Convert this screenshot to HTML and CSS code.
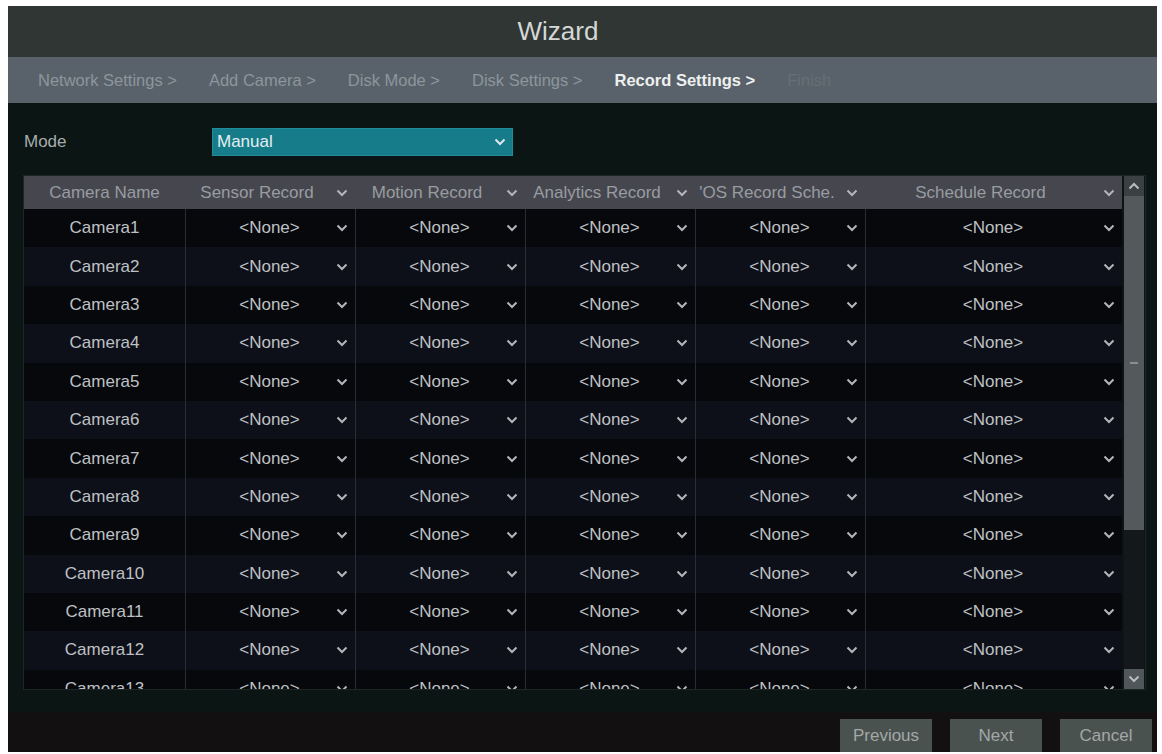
FILE: index.html
```html
<!DOCTYPE html>
<html>
<head>
<meta charset="utf-8">
<title>Wizard</title>
<link rel="stylesheet" href="styles.css">
</head>
<body>
<svg class="defs" width="0" height="0">
  <symbol id="chev" viewBox="0 0 12 8"><path d="M1.5 1.5L6 6l4.5-4.5" fill="none" stroke="currentColor" stroke-width="2"/></symbol>
  <symbol id="chevup" viewBox="0 0 12 8"><path d="M1.5 6.5L6 2l4.5 4.5" fill="none" stroke="currentColor" stroke-width="2"/></symbol>
</svg>
<div class="window">
  <div class="titlebar">Wizard</div>
  <div class="steps">
    <span class="step">Network Settings &gt;</span>
    <span class="step">Add Camera &gt;</span>
    <span class="step">Disk Mode &gt;</span>
    <span class="step">Disk Settings &gt;</span>
    <span class="step active">Record Settings &gt;</span>
    <span class="step future">Finish</span>
  </div>
  <div class="content">
    <div class="mode-row">
      <span class="mode-label">Mode</span>
      <div class="select"><span>Manual</span><svg class="ic"><use href="#chev"/></svg></div>
    </div>
    <div class="table-frame">
      <div class="grid">
        <div class="thead">
          <div class="hcell name">Camera Name</div>
          <div class="hcell"><span class="val">Sensor Record</span><span class="slot"><svg class="ic"><use href="#chev"/></svg></span></div>
          <div class="hcell"><span class="val">Motion Record</span><span class="slot"><svg class="ic"><use href="#chev"/></svg></span></div>
          <div class="hcell"><span class="val">Analytics Record</span><span class="slot"><svg class="ic"><use href="#chev"/></svg></span></div>
          <div class="hcell"><span class="val">'OS Record Sche.</span><span class="slot"><svg class="ic"><use href="#chev"/></svg></span></div>
          <div class="hcell"><span class="val">Schedule Record</span><span class="slot"><svg class="ic"><use href="#chev"/></svg></span></div>
        </div>
        <div class="tbody">
          <div class="row"><div class="cell name">Camera1</div><div class="cell dd"><span class="val">&lt;None&gt;</span><span class="slot"><svg class="ic"><use href="#chev"/></svg></span></div><div class="cell dd"><span class="val">&lt;None&gt;</span><span class="slot"><svg class="ic"><use href="#chev"/></svg></span></div><div class="cell dd"><span class="val">&lt;None&gt;</span><span class="slot"><svg class="ic"><use href="#chev"/></svg></span></div><div class="cell dd"><span class="val">&lt;None&gt;</span><span class="slot"><svg class="ic"><use href="#chev"/></svg></span></div><div class="cell dd"><span class="val">&lt;None&gt;</span><span class="slot"><svg class="ic"><use href="#chev"/></svg></span></div></div>
          <div class="row"><div class="cell name">Camera2</div><div class="cell dd"><span class="val">&lt;None&gt;</span><span class="slot"><svg class="ic"><use href="#chev"/></svg></span></div><div class="cell dd"><span class="val">&lt;None&gt;</span><span class="slot"><svg class="ic"><use href="#chev"/></svg></span></div><div class="cell dd"><span class="val">&lt;None&gt;</span><span class="slot"><svg class="ic"><use href="#chev"/></svg></span></div><div class="cell dd"><span class="val">&lt;None&gt;</span><span class="slot"><svg class="ic"><use href="#chev"/></svg></span></div><div class="cell dd"><span class="val">&lt;None&gt;</span><span class="slot"><svg class="ic"><use href="#chev"/></svg></span></div></div>
          <div class="row"><div class="cell name">Camera3</div><div class="cell dd"><span class="val">&lt;None&gt;</span><span class="slot"><svg class="ic"><use href="#chev"/></svg></span></div><div class="cell dd"><span class="val">&lt;None&gt;</span><span class="slot"><svg class="ic"><use href="#chev"/></svg></span></div><div class="cell dd"><span class="val">&lt;None&gt;</span><span class="slot"><svg class="ic"><use href="#chev"/></svg></span></div><div class="cell dd"><span class="val">&lt;None&gt;</span><span class="slot"><svg class="ic"><use href="#chev"/></svg></span></div><div class="cell dd"><span class="val">&lt;None&gt;</span><span class="slot"><svg class="ic"><use href="#chev"/></svg></span></div></div>
          <div class="row"><div class="cell name">Camera4</div><div class="cell dd"><span class="val">&lt;None&gt;</span><span class="slot"><svg class="ic"><use href="#chev"/></svg></span></div><div class="cell dd"><span class="val">&lt;None&gt;</span><span class="slot"><svg class="ic"><use href="#chev"/></svg></span></div><div class="cell dd"><span class="val">&lt;None&gt;</span><span class="slot"><svg class="ic"><use href="#chev"/></svg></span></div><div class="cell dd"><span class="val">&lt;None&gt;</span><span class="slot"><svg class="ic"><use href="#chev"/></svg></span></div><div class="cell dd"><span class="val">&lt;None&gt;</span><span class="slot"><svg class="ic"><use href="#chev"/></svg></span></div></div>
          <div class="row"><div class="cell name">Camera5</div><div class="cell dd"><span class="val">&lt;None&gt;</span><span class="slot"><svg class="ic"><use href="#chev"/></svg></span></div><div class="cell dd"><span class="val">&lt;None&gt;</span><span class="slot"><svg class="ic"><use href="#chev"/></svg></span></div><div class="cell dd"><span class="val">&lt;None&gt;</span><span class="slot"><svg class="ic"><use href="#chev"/></svg></span></div><div class="cell dd"><span class="val">&lt;None&gt;</span><span class="slot"><svg class="ic"><use href="#chev"/></svg></span></div><div class="cell dd"><span class="val">&lt;None&gt;</span><span class="slot"><svg class="ic"><use href="#chev"/></svg></span></div></div>
          <div class="row"><div class="cell name">Camera6</div><div class="cell dd"><span class="val">&lt;None&gt;</span><span class="slot"><svg class="ic"><use href="#chev"/></svg></span></div><div class="cell dd"><span class="val">&lt;None&gt;</span><span class="slot"><svg class="ic"><use href="#chev"/></svg></span></div><div class="cell dd"><span class="val">&lt;None&gt;</span><span class="slot"><svg class="ic"><use href="#chev"/></svg></span></div><div class="cell dd"><span class="val">&lt;None&gt;</span><span class="slot"><svg class="ic"><use href="#chev"/></svg></span></div><div class="cell dd"><span class="val">&lt;None&gt;</span><span class="slot"><svg class="ic"><use href="#chev"/></svg></span></div></div>
          <div class="row"><div class="cell name">Camera7</div><div class="cell dd"><span class="val">&lt;None&gt;</span><span class="slot"><svg class="ic"><use href="#chev"/></svg></span></div><div class="cell dd"><span class="val">&lt;None&gt;</span><span class="slot"><svg class="ic"><use href="#chev"/></svg></span></div><div class="cell dd"><span class="val">&lt;None&gt;</span><span class="slot"><svg class="ic"><use href="#chev"/></svg></span></div><div class="cell dd"><span class="val">&lt;None&gt;</span><span class="slot"><svg class="ic"><use href="#chev"/></svg></span></div><div class="cell dd"><span class="val">&lt;None&gt;</span><span class="slot"><svg class="ic"><use href="#chev"/></svg></span></div></div>
          <div class="row"><div class="cell name">Camera8</div><div class="cell dd"><span class="val">&lt;None&gt;</span><span class="slot"><svg class="ic"><use href="#chev"/></svg></span></div><div class="cell dd"><span class="val">&lt;None&gt;</span><span class="slot"><svg class="ic"><use href="#chev"/></svg></span></div><div class="cell dd"><span class="val">&lt;None&gt;</span><span class="slot"><svg class="ic"><use href="#chev"/></svg></span></div><div class="cell dd"><span class="val">&lt;None&gt;</span><span class="slot"><svg class="ic"><use href="#chev"/></svg></span></div><div class="cell dd"><span class="val">&lt;None&gt;</span><span class="slot"><svg class="ic"><use href="#chev"/></svg></span></div></div>
          <div class="row"><div class="cell name">Camera9</div><div class="cell dd"><span class="val">&lt;None&gt;</span><span class="slot"><svg class="ic"><use href="#chev"/></svg></span></div><div class="cell dd"><span class="val">&lt;None&gt;</span><span class="slot"><svg class="ic"><use href="#chev"/></svg></span></div><div class="cell dd"><span class="val">&lt;None&gt;</span><span class="slot"><svg class="ic"><use href="#chev"/></svg></span></div><div class="cell dd"><span class="val">&lt;None&gt;</span><span class="slot"><svg class="ic"><use href="#chev"/></svg></span></div><div class="cell dd"><span class="val">&lt;None&gt;</span><span class="slot"><svg class="ic"><use href="#chev"/></svg></span></div></div>
          <div class="row"><div class="cell name">Camera10</div><div class="cell dd"><span class="val">&lt;None&gt;</span><span class="slot"><svg class="ic"><use href="#chev"/></svg></span></div><div class="cell dd"><span class="val">&lt;None&gt;</span><span class="slot"><svg class="ic"><use href="#chev"/></svg></span></div><div class="cell dd"><span class="val">&lt;None&gt;</span><span class="slot"><svg class="ic"><use href="#chev"/></svg></span></div><div class="cell dd"><span class="val">&lt;None&gt;</span><span class="slot"><svg class="ic"><use href="#chev"/></svg></span></div><div class="cell dd"><span class="val">&lt;None&gt;</span><span class="slot"><svg class="ic"><use href="#chev"/></svg></span></div></div>
          <div class="row"><div class="cell name">Camera11</div><div class="cell dd"><span class="val">&lt;None&gt;</span><span class="slot"><svg class="ic"><use href="#chev"/></svg></span></div><div class="cell dd"><span class="val">&lt;None&gt;</span><span class="slot"><svg class="ic"><use href="#chev"/></svg></span></div><div class="cell dd"><span class="val">&lt;None&gt;</span><span class="slot"><svg class="ic"><use href="#chev"/></svg></span></div><div class="cell dd"><span class="val">&lt;None&gt;</span><span class="slot"><svg class="ic"><use href="#chev"/></svg></span></div><div class="cell dd"><span class="val">&lt;None&gt;</span><span class="slot"><svg class="ic"><use href="#chev"/></svg></span></div></div>
          <div class="row"><div class="cell name">Camera12</div><div class="cell dd"><span class="val">&lt;None&gt;</span><span class="slot"><svg class="ic"><use href="#chev"/></svg></span></div><div class="cell dd"><span class="val">&lt;None&gt;</span><span class="slot"><svg class="ic"><use href="#chev"/></svg></span></div><div class="cell dd"><span class="val">&lt;None&gt;</span><span class="slot"><svg class="ic"><use href="#chev"/></svg></span></div><div class="cell dd"><span class="val">&lt;None&gt;</span><span class="slot"><svg class="ic"><use href="#chev"/></svg></span></div><div class="cell dd"><span class="val">&lt;None&gt;</span><span class="slot"><svg class="ic"><use href="#chev"/></svg></span></div></div>
          <div class="row"><div class="cell name">Camera13</div><div class="cell dd"><span class="val">&lt;None&gt;</span><span class="slot"><svg class="ic"><use href="#chev"/></svg></span></div><div class="cell dd"><span class="val">&lt;None&gt;</span><span class="slot"><svg class="ic"><use href="#chev"/></svg></span></div><div class="cell dd"><span class="val">&lt;None&gt;</span><span class="slot"><svg class="ic"><use href="#chev"/></svg></span></div><div class="cell dd"><span class="val">&lt;None&gt;</span><span class="slot"><svg class="ic"><use href="#chev"/></svg></span></div><div class="cell dd"><span class="val">&lt;None&gt;</span><span class="slot"><svg class="ic"><use href="#chev"/></svg></span></div></div>
        </div>
      </div>
      <div class="scrollbar">
        <div class="sb-btn sb-up"><svg class="ic"><use href="#chevup"/></svg></div>
        <div class="sb-thumb"><span class="grip"></span></div>
        <div class="sb-track"></div>
        <div class="sb-btn sb-down"><svg class="ic"><use href="#chev"/></svg></div>
      </div>
    </div>
  </div>
  <div class="footer">
    <div class="btn">Previous</div>
    <div class="btn">Next</div>
    <div class="btn">Cancel</div>
  </div>
</div>
</body>
</html>
```
FILE: styles.css
```css
html, body {
  margin: 0;
  height: 754px;
  overflow: hidden;
  background: #ffffff;
}
body {
  padding: 6px 5px 2px 8px;
  box-sizing: border-box;
  font-family: "Liberation Sans", Arial, sans-serif;
}
.defs {
  position: absolute;
  width: 0;
  height: 0;
  overflow: hidden;
}
.window {
  height: 746px;
  display: flex;
  flex-direction: column;
  background: #0a1514;
}
.titlebar {
  height: 51px;
  flex: none;
  background: #2f3634;
  color: #d4d7d6;
  font-size: 26px;
  display: flex;
  align-items: center;
  justify-content: center;
  padding-right: 49px;
}
.steps {
  height: 46px;
  flex: none;
  background: #59626a;
  display: flex;
  align-items: center;
  gap: 32px;
  padding-left: 30px;
  font-size: 16.5px;
  color: #8c969c;
  white-space: nowrap;
}
.step.active {
  color: #eef0f0;
  font-weight: bold;
}
.step.future {
  color: #666f76;
}
.content {
  flex: 1;
  display: flex;
  flex-direction: column;
  padding: 25px 0 0 15px;
}
.mode-row {
  display: flex;
  align-items: center;
  height: 28px;
}
.mode-label {
  width: 188px;
  padding-left: 1px;
  color: #a6adad;
  font-size: 17px;
}
.select {
  width: 301px;
  height: 28px;
  box-sizing: border-box;
  background: #167c8a;
  border: 1px solid #1f8d9c;
  display: flex;
  align-items: center;
  justify-content: space-between;
  padding: 0 6px 0 4px;
  color: #e4eef0;
  font-size: 17px;
}
.select .ic {
  color: #dfe9ea;
}
.ic {
  width: 12px;
  height: 8px;
  color: #b2b6ba;
  display: block;
}
.table-frame {
  margin-top: 19px;
  width: 1123px;
  box-sizing: border-box;
  height: 515px;
  border: 1px solid #1c2624;
  padding-right: 1px;
  display: flex;
  gap: 2px;
}
.grid {
  width: 1098px;
  display: flex;
  flex-direction: column;
  overflow: hidden;
}
.thead, .row {
  display: grid;
  grid-template-columns: 161px 170px 170px 170px 170px 257px;
}
.thead {
  height: 33px;
  flex: none;
  background: #46474e;
  color: #989ca1;
  font-size: 17px;
}
.hcell {
  display: flex;
  align-items: center;
  white-space: nowrap;
  overflow: hidden;
}
.hcell.name {
  justify-content: center;
}
.val {
  flex: 1;
  text-align: center;
  white-space: nowrap;
}
.slot {
  width: 26px;
  flex: none;
  display: flex;
  justify-content: center;
}
.tbody {
  flex: 1;
  overflow: hidden;
}
.row {
  height: 38.4px;
  font-size: 17px;
  color: #bfc1c4;
}
.row:nth-child(odd) {
  background: #07080c;
}
.row:nth-child(even) {
  background: #0e1019;
}
.cell {
  display: flex;
  align-items: center;
  border-left: 1px solid #2a2d35;
}
.cell.name {
  border-left: none;
  justify-content: center;
}
.cell.dd {
  padding-left: 24px;
}
.scrollbar {
  width: 20px;
  display: flex;
  flex-direction: column;
}
.sb-btn {
  height: 20px;
  flex: none;
  display: flex;
  align-items: center;
  justify-content: center;
}
.sb-up {
  background: #3b4043;
}
.sb-down {
  background: #50575a;
}
.sb-btn .ic {
  color: #b8bdbe;
}
.sb-thumb {
  height: 334px;
  flex: none;
  background: #545a5c;
  display: flex;
  align-items: center;
  justify-content: center;
}
.grip {
  width: 8px;
  height: 2px;
  background: #8a9092;
}
.sb-track {
  flex: 1;
  background: #15181a;
}
.footer {
  height: 40px;
  flex: none;
  box-sizing: border-box;
  background: #121010;
  display: flex;
  justify-content: flex-end;
  gap: 18px;
  padding: 7px 5px 0 0;
}
.btn {
  width: 92px;
  height: 33px;
  background: #4a5250;
  color: #a2a8a7;
  font-size: 17px;
  display: flex;
  align-items: center;
  justify-content: center;
}
```
